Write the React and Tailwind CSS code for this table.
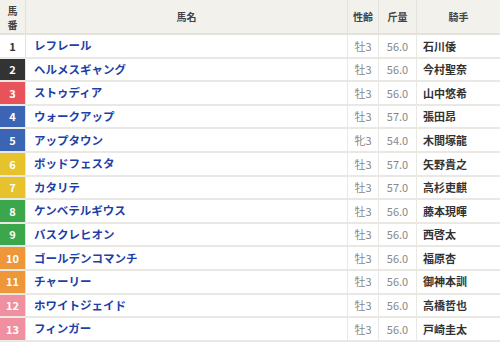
const horses = [
  { no: 1, name: 'レフレール', sex: '牡3', kg: '56.0', jockey: '石川倭', color: 'bg-white text-[#333]' },
  { no: 2, name: 'ヘルメスギャング', sex: '牡3', kg: '56.0', jockey: '今村聖奈', color: 'bg-[#333333] text-white' },
  { no: 3, name: 'ストゥディア', sex: '牡3', kg: '56.0', jockey: '山中悠希', color: 'bg-[#e8525a] text-white' },
  { no: 4, name: 'ウォークアップ', sex: '牡3', kg: '57.0', jockey: '張田昂', color: 'bg-[#3c64b4] text-white' },
  { no: 5, name: 'アップタウン', sex: '牝3', kg: '54.0', jockey: '木間塚龍', color: 'bg-[#3c64b4] text-white' },
  { no: 6, name: 'ボッドフェスタ', sex: '牡3', kg: '57.0', jockey: '矢野貴之', color: 'bg-[#e6c22c] text-white' },
  { no: 7, name: 'カタリテ', sex: '牡3', kg: '57.0', jockey: '高杉吏麒', color: 'bg-[#e6c22c] text-white' },
  { no: 8, name: 'ケンベテルギウス', sex: '牡3', kg: '56.0', jockey: '藤本現暉', color: 'bg-[#3ba64b] text-white' },
  { no: 9, name: 'バスクレヒオン', sex: '牡3', kg: '56.0', jockey: '西啓太', color: 'bg-[#3ba64b] text-white' },
  { no: 10, name: 'ゴールデンコマンチ', sex: '牡3', kg: '56.0', jockey: '福原杏', color: 'bg-[#ee963a] text-white' },
  { no: 11, name: 'チャーリー', sex: '牡3', kg: '56.0', jockey: '御神本訓', color: 'bg-[#ee963a] text-white' },
  { no: 12, name: 'ホワイトジェイド', sex: '牡3', kg: '56.0', jockey: '高橋哲也', color: 'bg-[#ef8fa0] text-white' },
  { no: 13, name: 'フィンガー', sex: '牡3', kg: '56.0', jockey: '戸崎圭太', color: 'bg-[#ef8fa0] text-white' },
];

export default function App() {
  return (
    <div className="w-[500px] h-[342px] overflow-hidden bg-white font-['Noto_Sans_CJK_JP','Noto_Sans',sans-serif]">
      {/* header */}
      <div className="grid grid-cols-[26px_321px_31px_38px_84px] h-[35px] bg-[#f3f1ec] border-b-2 border-[#e4e2dc] text-[10px] font-bold text-[#444]">
        <div className="flex flex-col items-center justify-center border-r border-[#e4e2dc] leading-[14px] pt-[2px]">
          <span>馬</span>
          <span>番</span>
        </div>
        <div className="flex items-center justify-center">馬名</div>
        <div className="flex items-center justify-center border-l border-[#e4e2dc]">性齢</div>
        <div className="flex items-center justify-center border-l border-[#e4e2dc]">斤量</div>
        <div className="flex items-center justify-center border-l border-[#e4e2dc]">騎手</div>
      </div>

      {horses.map((h) => (
        <div
          key={h.no}
          className="grid grid-cols-[26px_321px_31px_38px_84px] h-[23.6px] border-b-2 border-[#eae8e3]"
        >
          <div className={`flex items-center justify-center text-[11px] font-bold border-r border-[#e4e2dc] ${h.color}`}>
            {h.no}
          </div>
          <div className="flex items-center pl-[8px] text-[11.5px] font-bold text-[#1d3fa6]">{h.name}</div>
          <div className="flex items-center justify-center border-l border-[#eae8e3] text-[11px] text-[#888]">{h.sex}</div>
          <div className="flex items-center justify-center border-l border-[#eae8e3] text-[11px] text-[#888]">{h.kg}</div>
          <div className="flex items-center pl-[6px] border-l border-[#eae8e3] text-[11px] font-bold text-[#333]">{h.jockey}</div>
        </div>
      ))}
    </div>
  );
}
